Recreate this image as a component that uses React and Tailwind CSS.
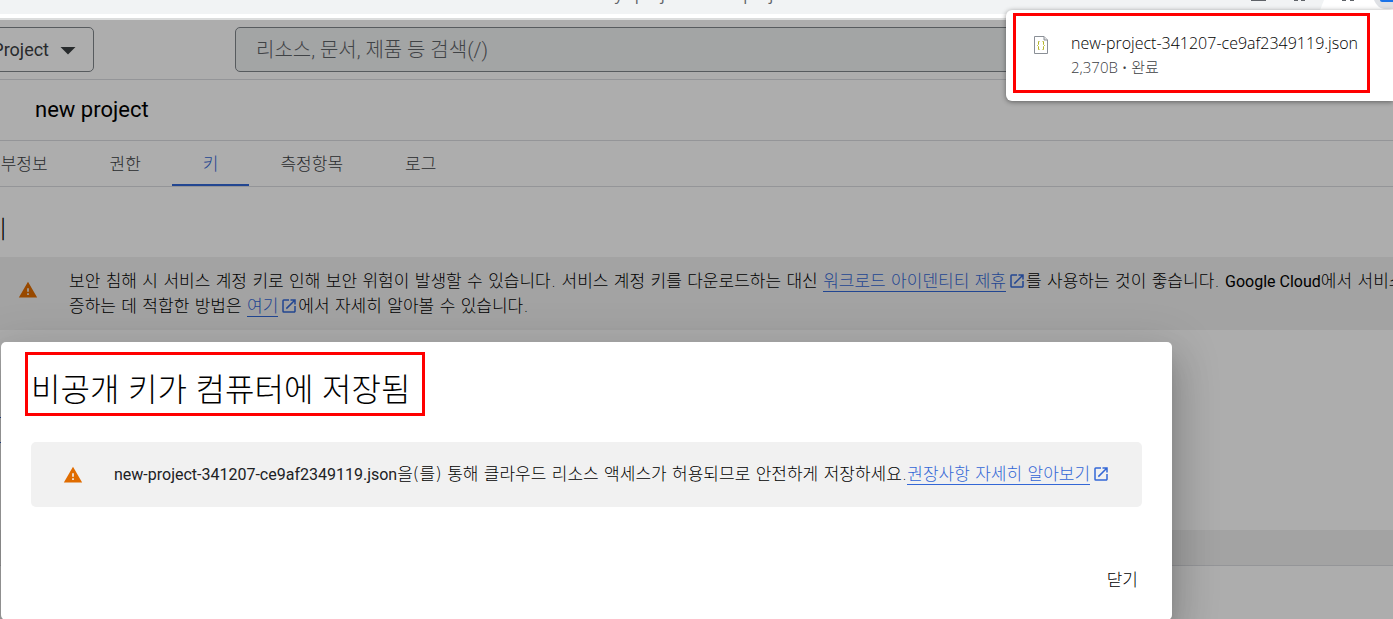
import { MdArrowDropDown, MdOpenInNew, MdWarning } from 'react-icons/md';

const tabs = [
  { label: '세부정보', active: false },
  { label: '권한', active: false },
  { label: '키', active: true },
  { label: '측정항목', active: false },
  { label: '로그', active: false },
];

function DocLink({ children }) {
  return (
    <a href="#docs" className="text-[#3367d6]">
      <span className="border-b border-[#3367d6]">{children}</span>
      <MdOpenInNew className="ml-0.5 inline-block size-[18px] align-[-3px]" />
    </a>
  );
}

function JsonFileIcon() {
  return (
    <svg width="14" height="18" viewBox="0 0 14 18" fill="none" className="mt-1 shrink-0">
      <path d="M.5.5h9.500l3.500 3.500v13.500H.5z" fill="#fff" stroke="#8a8f96" />
      <path d="M10 .5V4h3.500" fill="#e3e3e3" stroke="#8a8f96" />
      <path d="M5.500 5.500h-1v3l-1 1 1 1v3h1M8.500 5.500h1v3l1 1-1 1v3h-1" stroke="#b5b52a" />
    </svg>
  );
}

// Only the lower edge of the browser toolbar is scrolled into view
function BrowserBar() {
  return (
    <div className="border-b-2 border-[#dcdddd] bg-white pb-1">
      <div className="flex h-3.5 items-start justify-between overflow-hidden bg-[#f1f3f4]">
        <p className="-mt-4 ml-[600px] flex font-['Open_Sans',sans-serif] text-base leading-5 whitespace-nowrap text-[#5f6368]">
          <span className="mr-3">my</span>
          <span className="mr-14">project</span>
          <span>project</span>
        </p>
        <svg width="144" height="14" viewBox="0 0 144 14" className="shrink-0">
          <path d="M68 14c3-3 4-6 5-9l2-5h69v14z" fill="#fff" />
          <path d="M2 0h15v1H2zM45 0h4v1h-4zM52 0h4v1h-4zM93 0h4v1h-4zM101 0h4v1h-4z" fill="#5f6368" />
          <path d="M125 0h19v9h-8c-5 0-9-4-11-9z" fill="#dfe1e5" />
          <path d="M131 0h13v2h-11c-1 0-2-1-2-2z" fill="#1a73e8" />
        </svg>
      </div>
    </div>
  );
}

function DownloadBubble() {
  return (
    <aside className="absolute top-2.5 right-0 z-20 w-[387px] rounded-l-md bg-white pt-[3px] pb-2 pl-[7px] shadow-[0_1px_5px_rgba(0,0,0,0.45)]">
      <div className="flex w-[357px] gap-[23px] border-[3px] border-[#ff0000] pt-4 pb-2.5 pl-[18px]">
        <JsonFileIcon />
        <div className="font-['Open_Sans','Noto_Sans_CJK_KR',sans-serif] whitespace-nowrap">
          <p className="text-base leading-[23px] font-light text-black">new-project-341207-ce9af2349119.json</p>
          <p className="text-[15px] leading-[25px] font-light text-[#3c4043]">2,370B • 완료</p>
        </div>
      </div>
    </aside>
  );
}

function KeySavedDialog() {
  return (
    <div
      role="dialog"
      aria-labelledby="dialog-title"
      className="absolute top-[322px] left-px z-10 w-[1171px] rounded-[5px] bg-white px-[30px] pt-2.5 pb-5 shadow-[0_11px_15px_-7px_rgba(0,0,0,0.2),0_24px_38px_3px_rgba(0,0,0,0.14),0_9px_46px_8px_rgba(0,0,0,0.12)]"
    >
      <h2
        id="dialog-title"
        className="-ml-1.5 w-[400px] border-[3px] border-[#ff0000] pt-2.5 pl-[3px] font-['Lato','Noto_Sans_CJK_KR',sans-serif] text-[32px] leading-[48px] font-light whitespace-nowrap text-black"
      >
        비공개 키가 컴퓨터에 저장됨
      </h2>
      <div className="mt-[26px] flex items-center rounded-[5px] bg-[#f1f1f1] px-8 py-5 whitespace-nowrap">
        <MdWarning className="mr-[31px] size-5 shrink-0 text-[#e06c00]" />
        <p className="font-['DejaVu_Sans','Noto_Sans_CJK_KR',sans-serif] text-[17px] leading-6 font-light text-black">
          <span className="font-['Roboto',sans-serif] text-base font-normal text-[#202124]">
            new-project-341207-ce9af2349119.json
          </span>
          을(를) 통해 클라우드 리소스 액세스가 허용되므로 안전하게 저장하세요.
          <DocLink>권장사항 자세히 알아보기</DocLink>
        </p>
      </div>
      <div className="mt-[53px] flex justify-end">
        <button type="button" className="px-1 py-2 text-[17px] leading-6 font-light text-black">
          닫기
        </button>
      </div>
    </div>
  );
}

export default function App() {
  return (
    <div className="relative flex min-h-screen flex-col overflow-hidden bg-white font-['Roboto','Noto_Sans_CJK_KR',sans-serif]">
      <BrowserBar />

      <div className="relative flex-1">
        {/* Top bar */}
        <header className="flex items-center border-b border-[#dadce0] py-[7px]">
          <button
            type="button"
            className="-ml-14 flex h-[45px] w-[150px] items-center justify-end gap-px rounded-[5px] border border-[#80868b] pr-[7px] text-lg whitespace-nowrap text-[#3c4043]"
          >
            New Project
            <MdArrowDropDown className="size-9" />
          </button>
          <input
            type="search"
            aria-label="검색"
            placeholder="리소스, 문서, 제품 등 검색(/)"
            className="ml-[141px] h-[45px] flex-1 rounded-[5px] border border-[#80868b] bg-[#f1f3f4] px-5 text-xl font-light placeholder:text-[#5f6368]"
          />
        </header>

        <h1 className="border-b border-[#dadce0] px-[35px] text-[22px] leading-[60px] text-black">new project</h1>

        <nav className="flex border-b border-[#dadce0] text-[17px] leading-10 font-light whitespace-nowrap text-[#3c4043]">
          {tabs.map((tab) => (
            <a
              key={tab.label}
              href="#tab"
              className={
                tab.active
                  ? 'border-b-2 border-[#3367d6] px-[31px] pt-[3px] text-[#3367d6]'
                  : 'border-b-2 border-transparent px-[31px] pt-[3px] first:-ml-[46px]'
              }
            >
              {tab.label}
            </a>
          ))}
        </nav>

        <h2 className="-ml-[15px] pt-7 pb-3 text-2xl leading-[30px] font-light text-black">키</h2>

        <div className="flex bg-[#f1f1f1] pt-3 pb-[11px]">
          <MdWarning className="mt-[11px] mr-[31px] ml-[18px] size-5 shrink-0 text-[#e06c00]" />
          <p className="font-['DejaVu_Sans','Noto_Sans_CJK_KR',sans-serif] text-[17px] leading-[25px] font-light whitespace-nowrap text-black">
            보안 침해 시 서비스 계정 키로 인해 보안 위험이 발생할 수 있습니다. 서비스 계정 키를 다운로드하는 대신{' '}
            <DocLink>워크로드 아이덴티티 제휴</DocLink>를 사용하는 것이 좋습니다.{' '}
            <span className="font-['Roboto',sans-serif] text-base font-normal">Google Cloud</span>에서 서비스 계정을 인
            <br />
            증하는 데 적합한 방법은 <DocLink>여기</DocLink>에서 자세히 알아볼 수 있습니다.
          </p>
        </div>

        <div className="py-[87px]">
          <button
            type="button"
            aria-label="키 추가"
            className="-ml-1 block h-[26px] w-20 border border-[#3367d6]"
          />
        </div>
        <div className="h-9 border-b border-[#dadce0] bg-[#f1f1f1]" />

        {/* Backdrop */}
        <div className="absolute inset-0 bg-black/32" />
        <KeySavedDialog />
      </div>

      <DownloadBubble />
    </div>
  );
}
